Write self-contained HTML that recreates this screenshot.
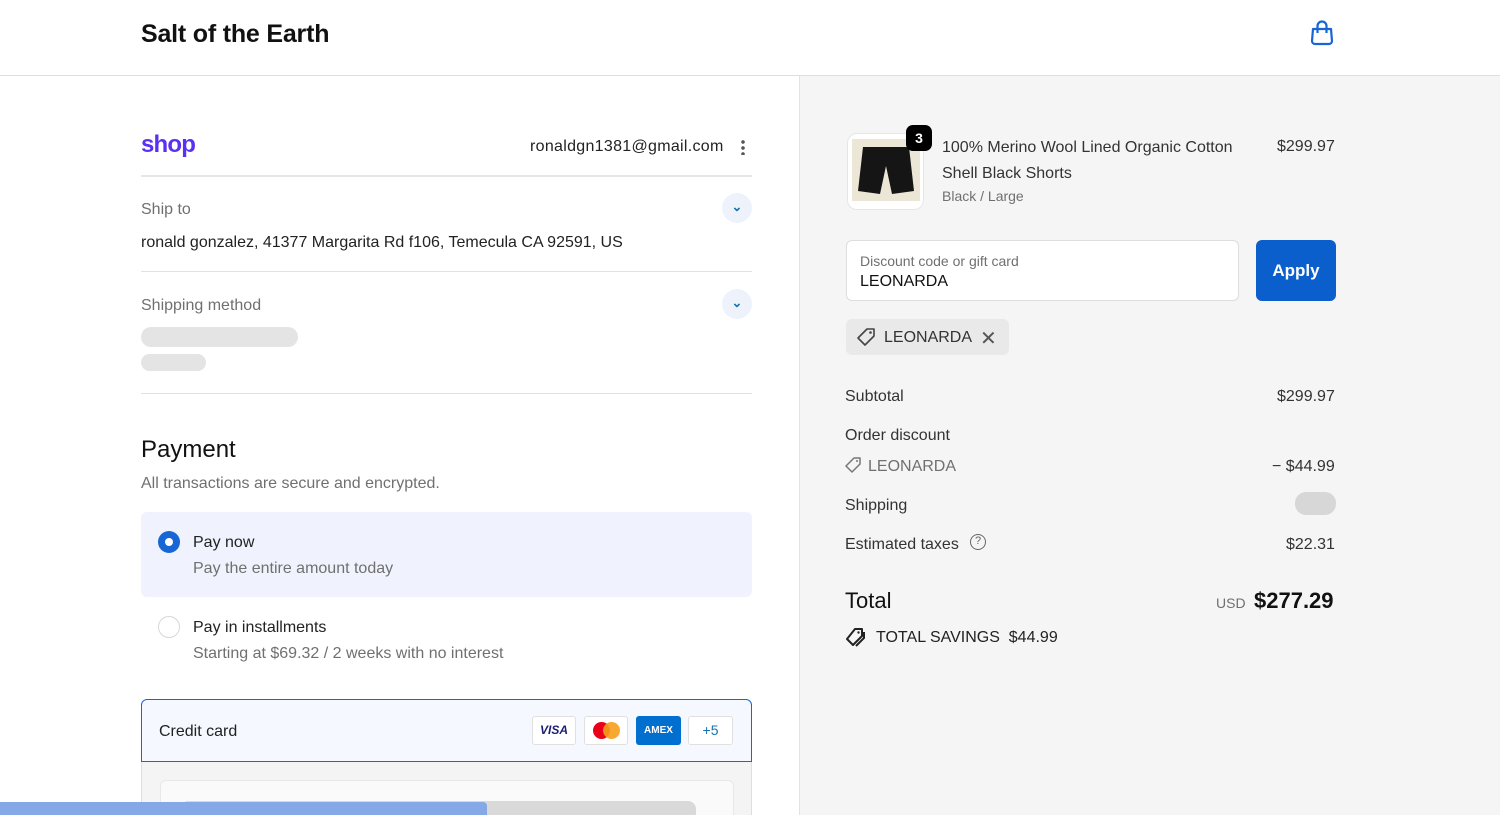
<!DOCTYPE html>
<html><head><meta charset="utf-8"><style>
*{box-sizing:border-box;margin:0;padding:0}
html,body{width:1500px;height:815px;overflow:hidden}
body{font-family:"Liberation Sans",sans-serif;color:#1a1a1a;background:#fff;position:relative}
.a{position:absolute;white-space:nowrap}
.g{color:#707070}
</style></head><body>
<div class="a" style="left:141px;top:20px;font-size:25px;font-weight:bold;color:#111;letter-spacing:-0.2px">Salt of the Earth</div>
<svg class="a" style="left:1309px;top:19px" width="26" height="28" viewBox="0 0 26 28"><path d="M4 10h18l1 12a3 3 0 0 1-3 3H6a3 3 0 0 1-3-3z" fill="none" stroke="#1866d6" stroke-width="2.2" stroke-linejoin="round"/><path d="M8.5 14V7a4.5 4.5 0 0 1 9 0v7" fill="none" stroke="#1866d6" stroke-width="2.2"/></svg>
<div class="a" style="left:0;top:75px;width:1500px;height:1px;background:#dedede"></div>
<div class="a" style="left:799px;top:76px;width:701px;height:739px;background:#f5f5f5;border-left:1px solid #e3e3e3"></div>

<div class="a" style="left:141px;top:131px;font-size:24px;font-weight:bold;color:#5a31f4;letter-spacing:-0.8px">shop</div>
<div class="a" style="left:530px;top:138px;font-size:16px;color:#222;letter-spacing:0.3px">ronaldgn1381@gmail.com</div>
<div class="a" style="left:741px;top:139px;width:4px;height:16px;background:radial-gradient(circle,#555 1.6px,transparent 2px) 0 0/4px 6px"></div>
<div class="a" style="left:141px;top:175px;width:611px;height:2px;background:#e6e6e6"></div>
<div class="a g" style="left:141px;top:201px;font-size:16px">Ship to</div>
<div class="a" style="left:722px;top:193px;width:30px;height:30px;border-radius:50%;background:#eef3fb;text-align:center;line-height:28px;color:#1773b0;font-size:13px;font-weight:bold">⌄</div>
<div class="a" style="left:141px;top:234px;font-size:16px;color:#222">ronald gonzalez, 41377 Margarita Rd f106, Temecula CA 92591, US</div>
<div class="a" style="left:141px;top:271px;width:611px;height:1px;background:#e1e1e1"></div>
<div class="a g" style="left:141px;top:297px;font-size:16px">Shipping method</div>
<div class="a" style="left:722px;top:289px;width:30px;height:30px;border-radius:50%;background:#eef3fb;text-align:center;line-height:28px;color:#1773b0;font-size:13px;font-weight:bold">⌄</div>
<div class="a" style="left:141px;top:327px;width:157px;height:20px;border-radius:10px;background:#e4e4e4"></div>
<div class="a" style="left:141px;top:354px;width:65px;height:17px;border-radius:9px;background:#e4e4e4"></div>
<div class="a" style="left:141px;top:393px;width:611px;height:1px;background:#e1e1e1"></div>

<div class="a" style="left:141px;top:436px;font-size:24px;font-weight:500;color:#111">Payment</div>
<div class="a g" style="left:141px;top:475px;font-size:16px">All transactions are secure and encrypted.</div>
<div class="a" style="left:141px;top:512px;width:611px;height:85px;border-radius:6px;background:#f0f3fd"></div>
<div class="a" style="left:158px;top:531px;width:22px;height:22px;border-radius:50%;background:#1866d6"></div>
<div class="a" style="left:165px;top:538px;width:8px;height:8px;border-radius:50%;background:#fff"></div>
<div class="a" style="left:193px;top:534px;font-size:16px;color:#222">Pay now</div>
<div class="a g" style="left:193px;top:560px;font-size:16px">Pay the entire amount today</div>
<div class="a" style="left:158px;top:616px;width:22px;height:22px;border-radius:50%;border:1px solid #d6d6d6"></div>
<div class="a" style="left:193px;top:619px;font-size:16px;color:#222">Pay in installments</div>
<div class="a g" style="left:193px;top:645px;font-size:16px">Starting at $69.32 / 2 weeks with no interest</div>

<div class="a" style="left:141px;top:699px;width:611px;height:63px;border:1.5px solid #1866d6;border-radius:6px 6px 0 0;background:#f5f8fe"></div>
<div class="a" style="left:159px;top:723px;font-size:16px;color:#222">Credit card</div>
<div class="a" style="left:532px;top:716px;width:44px;height:29px;border:1px solid #e0e0e0;border-radius:3px;background:#fff;font:italic bold 12px 'Liberation Sans';color:#1a1f71;text-align:center;line-height:27px">VISA</div>
<div class="a" style="left:584px;top:716px;width:44px;height:29px;border:1px solid #e0e0e0;border-radius:3px;background:#fff"></div>
<div class="a" style="left:593px;top:722px;width:17px;height:17px;border-radius:50%;background:#eb001b"></div>
<div class="a" style="left:603px;top:722px;width:17px;height:17px;border-radius:50%;background:#f79e1b;opacity:.9"></div>
<div class="a" style="left:636px;top:716px;width:45px;height:29px;border-radius:3px;background:#016fd0;color:#fff;font:bold 10px 'Liberation Sans';text-align:center;line-height:29px">AMEX</div>
<div class="a" style="left:688px;top:716px;width:45px;height:29px;border:1px solid #e0e0e0;border-radius:3px;background:#fff;font-size:14px;color:#1773b0;text-align:center;line-height:27px">+5</div>
<div class="a" style="left:141px;top:762px;width:611px;height:60px;background:#f4f4f4;border:1px solid #dedede;border-top:0"></div>
<div class="a" style="left:160px;top:780px;width:574px;height:50px;background:#fafafa;border:1px solid #e8e8e8;border-radius:6px"></div>
<div class="a" style="left:180px;top:801px;width:516px;height:20px;border-radius:8px;background:#d9d9d9"></div>
<div class="a" style="left:0;top:802px;width:487px;height:20px;border-radius:0 4px 0 0;background:#84a9e6"></div>

<div class="a" style="left:847px;top:133px;width:77px;height:77px;border-radius:10px;background:#fff;border:1px solid #e6e6e6;overflow:hidden">
<div style="position:absolute;left:4px;top:5px;width:68px;height:62px;background:#ece6d6"></div>
<svg style="position:absolute;left:5px;top:10px" width="66" height="55"><path d="M10 3h46l5 44-22 3-6-28-6 28-22-3z" fill="#151515"/></svg>
</div>
<div class="a" style="left:906px;top:125px;width:26px;height:26px;border-radius:7px;background:#000;color:#fff;font-size:14px;font-weight:bold;text-align:center;line-height:26px">3</div>
<div class="a" style="left:942px;top:135px;font-size:16px;color:#333;line-height:26px">100% Merino Wool Lined Organic Cotton<br>Shell Black Shorts</div>
<div class="a g" style="left:942px;top:188px;font-size:14px">Black / Large</div>
<div class="a" style="left:1277px;top:138px;font-size:16px;color:#333">$299.97</div>

<div class="a" style="left:846px;top:240px;width:393px;height:61px;border:1px solid #dedede;border-radius:6px;background:#fff"></div>
<div class="a g" style="left:860px;top:253px;font-size:14px">Discount code or gift card</div>
<div class="a" style="left:860px;top:273px;font-size:16px;color:#111">LEONARDA</div>
<div class="a" style="left:1256px;top:240px;width:80px;height:61px;border-radius:6px;background:#0b5fcc;color:#fff;font-size:17px;font-weight:bold;text-align:center;line-height:62px">Apply</div>

<div class="a" style="left:846px;top:319px;width:163px;height:36px;border-radius:6px;background:#e9e9e9"></div>
<svg class="a" style="left:856px;top:327px" width="22" height="20" viewBox="0 0 22 20"><path d="M11 2h7v7l-9 9-7-7z" fill="none" stroke="#444" stroke-width="1.6" stroke-linejoin="round"/><circle cx="14.5" cy="5.5" r="1.3" fill="#444"/></svg>
<div class="a" style="left:884px;top:329px;font-size:16px;color:#333">LEONARDA</div>
<div class="a" style="left:980px;top:326px;font-size:20px;color:#555">✕</div>

<div class="a" style="left:845px;top:388px;font-size:16px;color:#333">Subtotal</div>
<div class="a" style="left:1277px;top:388px;font-size:16px;color:#333">$299.97</div>
<div class="a" style="left:845px;top:427px;font-size:16px;color:#333">Order discount</div>
<svg class="a" style="left:845px;top:457px" width="18" height="17" viewBox="0 0 18 17"><path d="M9 1h6v6l-8 8-6-6z" fill="none" stroke="#777" stroke-width="1.5" stroke-linejoin="round"/><circle cx="12" cy="4" r="1" fill="#777"/></svg>
<div class="a g" style="left:868px;top:458px;font-size:16px">LEONARDA</div>
<div class="a" style="left:1272px;top:458px;font-size:16px;color:#333">− $44.99</div>
<div class="a" style="left:845px;top:497px;font-size:16px;color:#333">Shipping</div>
<div class="a" style="left:1295px;top:492px;width:41px;height:23px;border-radius:11px;background:#d7d7d7"></div>
<div class="a" style="left:845px;top:536px;font-size:16px;color:#333">Estimated taxes</div>
<div class="a" style="left:970px;top:534px;width:16px;height:16px;border-radius:50%;border:1.5px solid #666;font-size:11px;text-align:center;line-height:13px;color:#666">?</div>
<div class="a" style="left:1286px;top:536px;font-size:16px;color:#333">$22.31</div>
<div class="a" style="left:845px;top:588px;font-size:22px;font-weight:500;color:#111">Total</div>
<div class="a g" style="left:1216px;top:595px;font-size:14px">USD</div>
<div class="a" style="left:1254px;top:588px;font-size:22px;font-weight:bold;color:#111">$277.29</div>
<svg class="a" style="left:845px;top:627px" width="22" height="20" viewBox="0 0 22 20"><path d="M10 2h7v7l-9 9-6-6z" fill="none" stroke="#222" stroke-width="2" stroke-linejoin="round"/><path d="M19 5v6l-8 8" fill="none" stroke="#222" stroke-width="2"/><circle cx="13.5" cy="5.5" r="1.2" fill="#222"/></svg>
<div class="a" style="left:876px;top:629px;font-size:16px;color:#222">TOTAL SAVINGS&nbsp; $44.99</div>
</body></html>
